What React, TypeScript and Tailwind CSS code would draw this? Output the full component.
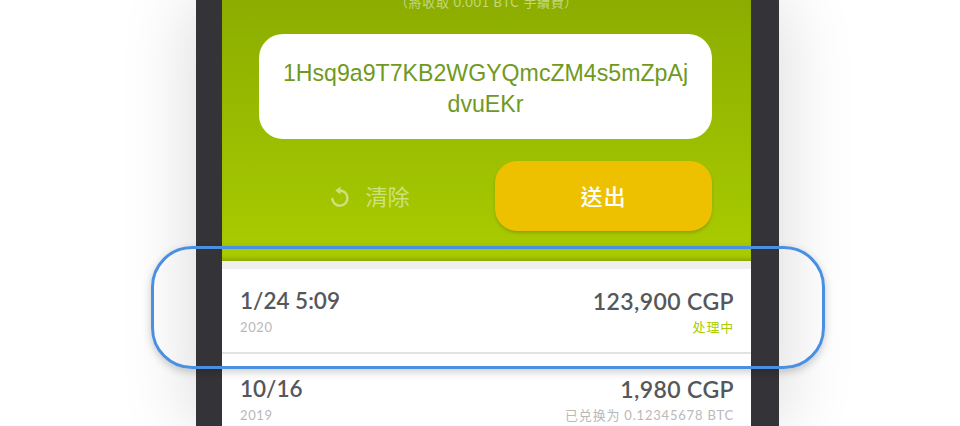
const sans = { fontFamily: '"Lato", "Noto Sans CJK TC", sans-serif' };

function TxRow({ date, year, amount, status, statusClass, topClass }: { date: string; year: string; amount: string; status: string; statusClass: string; topClass: string }) {
  return (
    <div className={`flex justify-between pl-[18px] pr-[17px] ${topClass}`}>
      <div>
        <div className="text-[22.5px] leading-[28px] font-semibold text-[#55575b]">{date}</div>
        <div className="text-[13px] leading-[18px] mt-[3px] tracking-[0.6px] text-[#b9b9b9]">{year}</div>
      </div>
      <div className="text-right">
        <div className="text-[23px] leading-[28px] font-semibold tracking-[0.4px] text-[#55575b]">{amount}</div>
        <div className={`text-[13px] leading-[18px] mt-[3px] tracking-[0.8px] ${statusClass}`}>{status}</div>
      </div>
    </div>
  );
}

export default function App() {
  return (
    <div className="relative w-[960px] h-[426px] overflow-hidden bg-white" style={sans}>
      <div className="ml-[196px] w-[583px] h-[426px] flex bg-[#333338] px-[26px] shadow-[0_0_70px_rgba(0,0,0,0.16)]">
        <div className="w-[529px] h-full bg-white flex flex-col">
          <div className="h-[261px] shrink-0 flex flex-col px-[37px] bg-gradient-to-b from-[#8cad00] to-[#a9cc00] shadow-[inset_0_-5px_4px_-3px_rgba(120,140,0,0.7)]">
            <div className="-mt-[5px] h-[14px] text-center text-[13px] leading-[14px] tracking-[0.6px] text-[#c5d77a]">（將收取 0.001 BTC 手續費）</div>
            <div
              className="mt-[25px] h-[105px] w-[453px] shrink-0 rounded-[24px] bg-white flex items-center justify-center text-center text-[23.15px] leading-[31px] text-[#6f9a1e]"
              style={{ fontFamily: '"Liberation Sans", sans-serif' }}
            >
              <div className="pt-[5px]">
                1Hsq9a9T7KB2WGYQmcZM4s5mZpAj
                <br />
                dvuEKr
              </div>
            </div>
            <div className="mt-[22px] flex w-[453px]">
              <div className="w-[222px] h-[70px] flex items-center justify-center gap-[15px] text-[#cfe07f] text-[22px]">
                <svg width="20" height="22" viewBox="0 0 20 22" fill="none" className="mt-[1px]">
                  <path d="M9.5 4.5A7.6 7.6 0 1 1 2.3 13" stroke="currentColor" strokeWidth="2.4" strokeLinecap="round" />
                  <path d="M5.2 4.5L10.5 0.6V8.4Z" fill="currentColor" />
                </svg>
                <span>清除</span>
              </div>
              <div className="ml-[14px] w-[217px] h-[70px] rounded-[22px] bg-[#edc000] flex items-center justify-center text-white text-[22px] font-medium tracking-[1px] shadow-[0_2px_3px_rgba(110,120,0,0.45)]">
                送出
              </div>
            </div>
          </div>
          <div className="h-[8px] bg-[#eeeeee] shrink-0" />
          <div className="h-[85px] shrink-0 border-b-2 border-[#dfe3e1]">
            <TxRow topClass="pt-[18px]" date="1/24 5:09" year="2020" amount="123,900 CGP" status="处理中" statusClass="text-[#aacc00]" />
          </div>
          <div className="-mt-[1px]">
            <TxRow topClass="pt-[22px]" date="10/16" year="2019" amount="1,980 CGP" status="已兑换为 0.12345678 BTC" statusClass="text-[#b9b9b9]" />
          </div>
        </div>
      </div>
      <div className="absolute left-[151px] top-[246px] w-[674px] h-[123px] rounded-[41px] border-[3px] border-[#4a90e2] shadow-[0_3px_8px_rgba(0,0,0,0.2)]" />
    </div>
  );
}
